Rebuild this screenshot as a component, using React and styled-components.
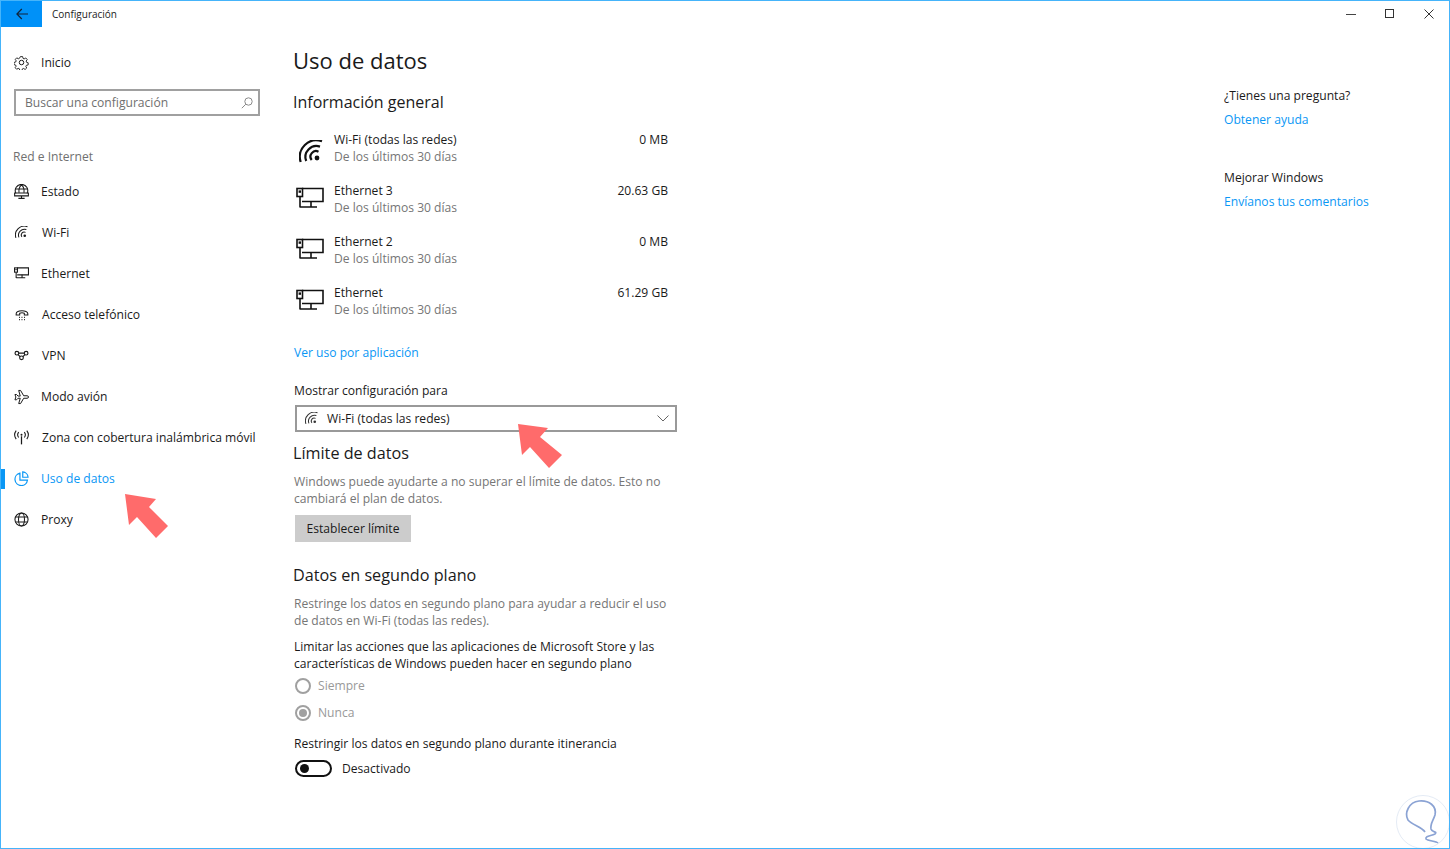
import React from 'react'
import styled, { createGlobalStyle } from 'styled-components'

const GlobalStyle = createGlobalStyle`
    html, body {
        margin: 0;
        padding: 0;
        background: #fff;
    }
    * {
        box-sizing: border-box;
    }
`

const BLUE = '#0a97f5'

const WifiIcon = ({ size = 24, weight = 2.2 }) => (
    <svg width={size} height={size} viewBox="0 0 24 24" fill="none" stroke="currentColor" strokeWidth={weight}>
        <path d="M12.7 20 A5.5 5.5 0 0 1 19.5 11.7" />
        <path d="M7.2 21 A11 11 0 0 1 21 6.6" />
        <path d="M1.7 22 A16.5 16.5 0 0 1 23 1.3" />
        <circle cx="18" cy="18" r="2.4" fill="currentColor" stroke="none" />
    </svg>
)

const EthernetIcon = ({ width = 28, height = 24, weight = 1.6 }) => (
    <svg width={width} height={height} viewBox="0 0 28 24" fill="none" stroke="currentColor" strokeWidth={weight}>
        <path d="M6 1.5H27V14.5H6" />
        <rect x="1" y="1.5" width="5.5" height="8" />
        <rect x="2.6" y="3.4" width="2.4" height="2.4" fill="currentColor" stroke="none" />
        <path d="M4 9.5V20.5M4 20H21M15 14.5V20" />
    </svg>
)

const icons = {
    gear: (
        <svg width="15" height="15" viewBox="0 0 24 24" fill="none" stroke="currentColor" strokeWidth="1.6">
            <path d="M10 1.5h4l.7 3.2 2 .9 2.9-1.7 2.6 2.9-1.9 2.6.6 2.2 3 1-.1 3.8-3.1.6-1 2 1.6 2.8-2.9 2.6-2.6-1.8-2.1.7-1 2.9h-3.8l-.7-3-2.1-.8-2.7 1.6-2.7-2.7 1.7-2.7-.8-2.1-3-.8v-3.8l3-.7.9-2.1-1.6-2.7 2.7-2.7 2.7 1.7 2.1-.9z" transform="translate(1.2 1.2) scale(.9)" />
            <circle cx="12" cy="12" r="3.6" />
        </svg>
    ),
    estado: (
        <svg width="15" height="15" viewBox="0 0 24 24" fill="none" stroke="currentColor" strokeWidth="1.7">
            <path d="M3 15A10 10 0 1 1 21 15" />
            <path d="M12 1.5C8 5 7.5 10 8 14M12 1.5C16 5 16.5 10 16 14M2.5 8H21.5" />
            <path d="M1 14.5H23V19H1zM12 19V23M7 23H17" />
        </svg>
    ),
    wifi: <WifiIcon size={13} weight={1.9} />,
    ethernet: <EthernetIcon width={15} height={13} weight={2} />,
    phone: (
        <svg width="14" height="14" viewBox="0 0 24 24" fill="none" stroke="currentColor" strokeWidth="1.8">
            <path d="M2 10C2 3 22 3 22 10V12H16V9C14 8 10 8 8 9V12H2z" />
            <path d="M7 16h1.5M11.2 16h1.5M15.5 16h1.5M7 20h1.5M11.2 20h1.5M15.5 20h1.5" strokeWidth="2" />
        </svg>
    ),
    vpn: (
        <svg width="15" height="13" viewBox="0 0 26 22" fill="none" stroke="currentColor" strokeWidth="2">
            <circle cx="5" cy="7" r="3.2" />
            <circle cx="21" cy="7" r="3.2" />
            <circle cx="13" cy="15" r="3.2" />
            <path d="M8 7H18M7 9.5L10.5 13M19 9.5L15.5 13" />
        </svg>
    ),
    plane: (
        <svg width="16" height="16" viewBox="0 0 24 24" fill="none" stroke="currentColor" strokeWidth="1.6">
            <path d="M1.5 8H4L6.5 10.5H10L7.5 1.5H10.5L15.5 10H21C24 10 24 14 21 14H15.5L10.5 22.5H7.5L10 14H6.5L4 16.5H1.5L3 12z" />
        </svg>
    ),
    hotspot: (
        <svg width="15" height="15" viewBox="0 0 24 24" fill="none" stroke="currentColor" strokeWidth="1.7">
            <path d="M12 10V23" strokeWidth="2" />
            <circle cx="12" cy="7.5" r="1.6" fill="currentColor" stroke="none" />
            <path d="M7.5 3.5C5.5 6 5.5 9.5 7.5 12M16.5 3.5C18.5 6 18.5 9.5 16.5 12M3.5 1C.5 5 .5 10.5 3.5 14.5M20.5 1C23.5 5 23.5 10.5 20.5 14.5" />
        </svg>
    ),
    pie: (
        <svg width="15" height="15" viewBox="0 0 24 24" fill="none" stroke="currentColor" strokeWidth="1.9">
            <path d="M9.5 3.5A10 10 0 1 0 21.5 14.5H9.5z" />
            <path d="M14 1.5A9 9 0 0 1 22.5 10H14z" />
        </svg>
    ),
    globe: (
        <svg width="15" height="15" viewBox="0 0 24 24" fill="none" stroke="currentColor" strokeWidth="1.7">
            <circle cx="12" cy="12" r="10.5" />
            <ellipse cx="12" cy="12" rx="4.8" ry="10.5" />
            <path d="M2.5 8H21.5M2.5 16H21.5" />
        </svg>
    ),
}

const navItems = [
    { icon: 'estado', label: 'Estado' },
    { icon: 'wifi', label: 'Wi-Fi', shift: 1 },
    { icon: 'ethernet', label: 'Ethernet' },
    { icon: 'phone', label: 'Acceso telefónico', shift: 1 },
    { icon: 'vpn', label: 'VPN', shift: 1 },
    { icon: 'plane', label: 'Modo avión' },
    { icon: 'hotspot', label: 'Zona con cobertura inalámbrica móvil', shift: 1 },
    { icon: 'pie', label: 'Uso de datos', active: true },
    { icon: 'globe', label: 'Proxy' },
]

const usage = [
    { name: 'Wi-Fi (todas las redes)', value: '0 MB', wifi: true },
    { name: 'Ethernet 3', value: '20.63 GB' },
    { name: 'Ethernet 2', value: '0 MB' },
    { name: 'Ethernet', value: '61.29 GB' },
]

function App() {
    return (
        <Window>
            <GlobalStyle />
            <TitleBar>
                <BackButton>
                    <svg width="12" height="12" viewBox="0 0 12 12" fill="none" stroke="#10233a" strokeWidth="1.2">
                        <path d="M1 6H12M5.8 1L.9 6l4.9 5" />
                    </svg>
                </BackButton>
                <WindowTitle>Configuración</WindowTitle>
                <WindowControls>
                    <WindowButton>
                        <svg width="10" height="10" viewBox="0 0 10 10" stroke="#444" fill="none"><path d="M0 5.5H10" /></svg>
                    </WindowButton>
                    <WindowButton>
                        <svg width="10" height="10" viewBox="0 0 10 10" stroke="#333" fill="none"><rect x=".5" y=".5" width="8" height="8" /></svg>
                    </WindowButton>
                    <WindowButton>
                        <svg width="10" height="10" viewBox="0 0 10 10" stroke="#333" fill="none"><path d="M.5.5L9.5 9.5M9.5.5L.5 9.5" /></svg>
                    </WindowButton>
                </WindowControls>
            </TitleBar>
            <Body>
                <Sidebar>
                    <NavItem>
                        <NavIcon>{icons.gear}</NavIcon>
                        Inicio
                    </NavItem>
                    <SearchBox>
                        Buscar una configuración
                        <svg width="12" height="12" viewBox="0 0 12 12" fill="none" stroke="#8a8a8a" strokeWidth="1">
                            <circle cx="7.5" cy="4.5" r="3.7" />
                            <path d="M4.8 7.2L.8 11.2" />
                        </svg>
                    </SearchBox>
                    <NavHeading>Red e Internet</NavHeading>
                    {navItems.map((item) => (
                        <NavItem key={item.label} $active={item.active} $shift={item.shift}>
                            {item.active && <ActiveBar />}
                            <NavIcon>{icons[item.icon]}</NavIcon>
                            {item.label}
                        </NavItem>
                    ))}
                </Sidebar>
                <Main>
                    <PageTitle>Uso de datos</PageTitle>
                    <SectionTitle>Información general</SectionTitle>
                    <UsageList>
                        {usage.map((row) => (
                            <UsageRow key={row.name}>
                                <UsageIcon $wifi={row.wifi}>{row.wifi ? <WifiIcon /> : <EthernetIcon />}</UsageIcon>
                                <UsageText>
                                    <span>{row.name}</span>
                                    <Muted>De los últimos 30 días</Muted>
                                </UsageText>
                                <UsageValue>{row.value}</UsageValue>
                            </UsageRow>
                        ))}
                    </UsageList>
                    <Content>
                        <Link>Ver uso por aplicación</Link>
                        <FieldLabel>Mostrar configuración para</FieldLabel>
                        <Select>
                            <SelectIcon><WifiIcon size={13} weight={1.9} /></SelectIcon>
                            Wi-Fi (todas las redes)
                            <svg width="12" height="7" viewBox="0 0 12 7" fill="none" stroke="#666" strokeWidth="1">
                                <path d="M.5.5L6 6l5.5-5.5" />
                            </svg>
                        </Select>
                        <SubTitle>Límite de datos</SubTitle>
                        <Paragraph>Windows puede ayudarte a no superar el límite de datos. Esto no cambiará el plan de datos.</Paragraph>
                        <Button>Establecer límite</Button>
                        <SubTitle $second>Datos en segundo plano</SubTitle>
                        <Paragraph>Restringe los datos en segundo plano para ayudar a reducir el uso de datos en Wi-Fi (todas las redes).</Paragraph>
                        <Dark>Limitar las acciones que las aplicaciones de Microsoft Store y las características de Windows pueden hacer en segundo plano</Dark>
                        <RadioRow>
                            <Radio />
                            Siempre
                        </RadioRow>
                        <RadioRow>
                            <Radio $checked />
                            Nunca
                        </RadioRow>
                        <RoamingLabel>Restringir los datos en segundo plano durante itinerancia</RoamingLabel>
                        <ToggleRow>
                            <Toggle />
                            Desactivado
                        </ToggleRow>
                    </Content>
                </Main>
                <Aside>
                    <AsideGroup>
                        <span>¿Tienes una pregunta?</span>
                        <AsideLink>Obtener ayuda</AsideLink>
                    </AsideGroup>
                    <AsideGroup>
                        <span>Mejorar Windows</span>
                        <AsideLink>Envíanos tus comentarios</AsideLink>
                    </AsideGroup>
                </Aside>
            </Body>
            <Arrow $left={124} $top={493} width="46" height="46" viewBox="0 0 46 46">
                <polygon points="1,1 32,6 25,14 44,33 32,45 13,24 5,32" />
            </Arrow>
            <Arrow $left={517} $top={423} width="46" height="46" viewBox="0 0 46 46">
                <polygon points="1,1 31,5 23,14 45,32 32,45 13,24 5,32" />
            </Arrow>
            <Watermark width="54" height="54" viewBox="0 0 54 54" fill="none">
                <circle cx="27" cy="27" r="26.5" stroke="#e4ebf5" />
                <path d="M29 37C26 32 16 30 12 25C8 18 13 7 23 6C33 5 41 11 39 20C37 26 34 29 35 34C36 38 42 36 39 39C35 41 29 41 30 44C32 46 40 46 42 48" stroke="#8ba3d4" strokeWidth="1.7" />
            </Watermark>
        </Window>
    )
}

export default App

const Window = styled.div`
    position: relative;
    width: 1450px;
    height: 849px;
    overflow: hidden;
    border: 1px solid #45b4fa;
    background: #fff;
    color: #1a1a1a;
    font-family: "Open Sans", "Noto Sans", sans-serif;
    font-size: 12.1px;
`

const TitleBar = styled.div`
    display: flex;
    align-items: center;
    height: 26px;
`

const BackButton = styled.div`
    display: flex;
    align-items: center;
    justify-content: center;
    width: 41px;
    height: 26px;
    background: #0091f8;
`

const WindowTitle = styled.div`
    margin-left: 10px;
    font-size: 10px;
    color: #222;
`

const WindowControls = styled.div`
    display: flex;
    margin-left: auto;
    margin-right: 1px;
`

const WindowButton = styled.div`
    display: flex;
    align-items: center;
    justify-content: center;
    width: 39px;
    height: 26px;
`

const Body = styled.div`
    display: flex;
    padding-top: 15px;
`

const Sidebar = styled.nav`
    flex: none;
    width: 292px;
`

const NavItem = styled.div`
    position: relative;
    display: flex;
    align-items: center;
    height: 41px;
    padding-left: 13px;
    color: ${(p) => (p.$active ? BLUE : '#1a1a1a')};
    white-space: nowrap;
    text-indent: ${(p) => (p.$shift ? 1 : 0)}px;
`

const NavIcon = styled.span`
    display: flex;
    align-items: center;
    justify-content: center;
    flex: none;
    width: 15px;
    margin-right: 12px;
    text-indent: 0;
`

const ActiveBar = styled.span`
    position: absolute;
    left: 0;
    top: 11px;
    width: 4px;
    height: 20px;
    background: ${BLUE};
`

const SearchBox = styled.div`
    display: flex;
    align-items: center;
    justify-content: space-between;
    width: 246px;
    height: 27px;
    margin: 6px 0 0 13px;
    padding: 0 5px 0 9px;
    border: 2px solid #a0a0a0;
    color: #6f6f6f;
`

const NavHeading = styled.div`
    height: 55px;
    padding: 32px 0 0 12px;
    line-height: 17px;
    color: #707070;
`

const Main = styled.main`
    flex: none;
    width: 385px;
`

const PageTitle = styled.h1`
    margin: 0;
    height: 36px;
    font-size: 22px;
    font-weight: 400;
    line-height: 36px;
    color: #1a1a1a;
`

const SectionTitle = styled.h2`
    margin: 12px 0 0;
    font-size: 16px;
    font-weight: 400;
    line-height: 24px;
`

const UsageList = styled.div`
    margin-top: 17px;
`

const UsageRow = styled.div`
    display: flex;
    height: 51px;
`

const UsageIcon = styled.span`
    display: flex;
    align-items: flex-start;
    flex: none;
    width: 41px;
    padding: ${(p) => (p.$wifi ? '9px 0 0 6px' : '5px 0 0 3px')};
    color: #111;
`

const UsageText = styled.div`
    display: flex;
    flex-direction: column;
    line-height: 17px;
`

const Muted = styled.span`
    color: #767676;
`

const UsageValue = styled.div`
    margin-left: auto;
    margin-right: 10px;
    line-height: 17px;
`

const Content = styled.div`
    padding-left: 1px;
`

const Link = styled.div`
    margin-top: 9px;
    line-height: 17px;
    color: ${BLUE};
`

const FieldLabel = styled.div`
    margin-top: 21px;
    line-height: 17px;
`

const Select = styled.div`
    display: flex;
    align-items: center;
    width: 382px;
    height: 27px;
    margin: 6px 0 0 1px;
    padding: 0 6px 0 8px;
    border: 2px solid #999;

    svg:last-child {
        margin-left: auto;
    }
`

const SelectIcon = styled.span`
    display: flex;
    margin-right: 9px;
    color: #333;
`

const SubTitle = styled.h3`
    margin: ${(p) => (p.$second ? '21px' : '9px')} 0 0 -1px;
    font-size: 16.2px;
    font-weight: 400;
    line-height: 24px;
`

const Paragraph = styled.p`
    margin: 8px 0 0;
    width: 384px;
    line-height: 17px;
    color: #767676;
`

const Button = styled.div`
    display: flex;
    align-items: center;
    justify-content: center;
    width: 116px;
    height: 27px;
    margin: 8px 0 0 1px;
    background: #ccc;
`

const Dark = styled.p`
    margin: 9px 0 0;
    width: 384px;
    line-height: 17px;
`

const RadioRow = styled.div`
    display: flex;
    align-items: center;
    height: 27px;
    color: #999;
`

const Radio = styled.span`
    position: relative;
    display: flex;
    align-items: center;
    justify-content: center;
    width: 16px;
    height: 16px;
    margin: 0 7px 0 1px;
    border: 2px solid #a0a0a0;
    border-radius: 50%;

    &::after {
        content: '';
        display: ${(p) => (p.$checked ? 'block' : 'none')};
        width: 8px;
        height: 8px;
        border-radius: 50%;
        background: #a0a0a0;
    }
`

const RoamingLabel = styled.div`
    margin-top: 9px;
    line-height: 17px;
`

const ToggleRow = styled.div`
    display: flex;
    align-items: center;
    margin-top: 8px;
    height: 17px;
`

const Toggle = styled.span`
    display: flex;
    align-items: center;
    width: 37px;
    height: 17px;
    margin: 0 10px 0 1px;
    padding-left: 3px;
    border: 2px solid #111;
    border-radius: 9px;

    &::after {
        content: '';
        width: 9px;
        height: 9px;
        border-radius: 50%;
        background: #111;
    }
`

const Aside = styled.aside`
    margin-left: 546px;
    padding-top: 45px;
`

const AsideGroup = styled.div`
    display: flex;
    flex-direction: column;
    gap: 7px;
    margin-bottom: 41px;
    line-height: 17px;
    white-space: nowrap;
`

const AsideLink = styled.span`
    color: ${BLUE};
`

const Arrow = styled.svg`
    position: absolute;
    left: ${(p) => p.$left - 1}px;
    top: ${(p) => p.$top - 1}px;
    fill: #ff6b6b;
`

const Watermark = styled.svg`
    position: absolute;
    right: -1px;
    bottom: -1px;
`
